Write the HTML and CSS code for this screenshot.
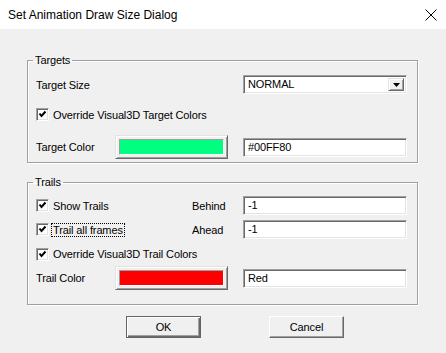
FILE: index.html
```html
<!DOCTYPE html>
<html>
<head>
<meta charset="utf-8">
<link rel="stylesheet" href="styles.css">
</head>
<body>
<div class="titlebar">
  <span class="title">Set Animation Draw Size Dialog</span>
  <svg class="close" width="12" height="12" viewBox="0 0 12 12"><path d="M0.5 0.5 L11.5 11.5 M11.5 0.5 L0.5 11.5" stroke="#000" stroke-width="1" fill="none"/></svg>
</div>
<div class="client">
  <fieldset class="group targets">
    <legend>Targets</legend>
    <div class="grid tgrid">
      <span class="lbl t-r1">Target Size</span>
      <div class="combo t-r1">NORMAL<span class="drop"><svg width="7" height="4" viewBox="0 0 7 4"><path d="M0 0 H7 L3.5 4 Z" fill="#000"/></svg></span></div>
      <label class="check t-r2"><span class="box"><svg width="9" height="9" viewBox="0 0 9 9"><path d="M1.5 3.5 L3.5 6 L7.5 1.5" stroke="#000" stroke-width="2" fill="none"/></svg></span><span>Override Visual3D Target Colors</span></label>
      <span class="lbl t-r3">Target Color</span>
      <div class="swatch t-r3"><span class="fill green"></span></div>
      <div class="field t-r3">#00FF80</div>
    </div>
  </fieldset>
  <fieldset class="group trails">
    <legend>Trails</legend>
    <div class="grid rgrid">
      <label class="check r-r1"><span class="box"><svg width="9" height="9" viewBox="0 0 9 9"><path d="M1.5 3.5 L3.5 6 L7.5 1.5" stroke="#000" stroke-width="2" fill="none"/></svg></span><span>Show Trails</span></label>
      <span class="side r-r1">Behind</span>
      <div class="field r-r1">-1</div>
      <label class="check r-r2"><span class="box"><svg width="9" height="9" viewBox="0 0 9 9"><path d="M1.5 3.5 L3.5 6 L7.5 1.5" stroke="#000" stroke-width="2" fill="none"/></svg></span><span class="focus">Trail all frames</span></label>
      <span class="side r-r2">Ahead</span>
      <div class="field r-r2">-1</div>
      <label class="check r-r3"><span class="box"><svg width="9" height="9" viewBox="0 0 9 9"><path d="M1.5 3.5 L3.5 6 L7.5 1.5" stroke="#000" stroke-width="2" fill="none"/></svg></span><span>Override Visual3D Trail Colors</span></label>
      <span class="lbl r-r4">Trail Color</span>
      <div class="swatch r-r4"><span class="fill red"></span></div>
      <div class="field r-r4">Red</div>
    </div>
  </fieldset>
  <div class="buttons">
    <button class="btn default">OK</button>
    <button class="btn">Cancel</button>
  </div>
</div>
</body>
</html>
```

FILE: styles.css
```css
* { box-sizing: border-box; }
html, body { margin: 0; padding: 0; }
body {
  width: 446px;
  height: 353px;
  overflow: hidden;
  background: #f0f0f0;
  font-family: "Liberation Sans", Arial, sans-serif;
  font-size: 11px;
  letter-spacing: -0.12px;
  color: #000;
}
.titlebar {
  height: 29px;
  background: #fff;
  display: flex;
  align-items: center;
  justify-content: space-between;
  padding: 0 9px 0 8px;
}
.title { font-size: 12px; letter-spacing: 0; }
.close { display: block; }
.client { padding: 25px 0 0 27px; }
.group {
  width: 391px;
  margin: 0;
  border: 1px solid #a0a0a0;
  box-shadow: 1px 1px 0 #fff, inset 1px 1px 0 #fff;
  min-width: 0;
}
.group legend {
  padding: 0 2px;
  margin-left: -3px;
  line-height: 13px;
}
.targets { padding: 8px 10px 3px 8px; }
.trails { padding: 7px 10px 14px 8px; margin-top: 13px; }
.grid {
  display: grid;
  grid-template-columns: 79px 113px 15px 164px;
  align-items: center;
}
.tgrid { grid-template-rows: 19px 41px 24px; }
.rgrid { grid-template-rows: 19px 5px 19px 3px 24px 24px; }
.t-r1 { grid-row: 1; }
.t-r2 { grid-row: 2; }
.t-r3 { grid-row: 3; }
.r-r1 { grid-row: 1; }
.r-r2 { grid-row: 3; }
.r-r3 { grid-row: 5; }
.r-r4 { grid-row: 6; }
.lbl { grid-column: 1; }
.check { grid-column: 1 / 4; display: flex; align-items: center; gap: 4px; }
.side { grid-column: 2; margin-left: 77px; }
.combo, .field { grid-column: 4; }
.swatch { grid-column: 2; }

.box {
  width: 13px;
  height: 13px;
  background: #fff;
  border: 1px solid;
  border-color: #a0a0a0 #fff #fff #a0a0a0;
  box-shadow: inset 1px 1px 0 #696969, inset -1px -1px 0 #e3e3e3;
  display: flex;
  align-items: center;
  justify-content: center;
  flex: none;
}
.box svg { display: block; }
.focus { outline: 1px dotted #000; outline-offset: 0; padding: 0 1px; margin-left: -1px; }

.field, .combo {
  height: 19px;
  background: #fff;
  border: 1px solid;
  border-color: #a0a0a0 #fff #fff #a0a0a0;
  box-shadow: inset 1px 1px 0 #696969, inset -1px -1px 0 #e3e3e3;
  padding: 0 4px;
  line-height: 17px;
}
.combo { position: relative; }
.drop {
  position: absolute;
  right: 2px;
  top: 2px;
  width: 16px;
  height: 13px;
  background: #f0f0f0;
  border: 1px solid;
  border-color: #e3e3e3 #696969 #696969 #e3e3e3;
  box-shadow: inset 1px 1px 0 #fff, inset -1px -1px 0 #a0a0a0;
  display: flex;
  align-items: center;
  justify-content: center;
}
.drop svg { display: block; }

.swatch {
  height: 24px;
  background: #f0f0f0;
  border: 1px solid;
  border-color: #e3e3e3 #696969 #696969 #e3e3e3;
  box-shadow: inset 1px 1px 0 #fff, inset -1px -1px 0 #a0a0a0;
  padding: 3px;
  display: flex;
}
.fill {
  flex: 1;
  border: 1px solid;
  border-color: #a0a0a0 #fff #fff #a0a0a0;
}
.green { background: #00ff80; }
.red { background: #ff0000; }

.buttons {
  display: flex;
  gap: 68px;
  padding: 11px 0 0 99px;
}
.btn {
  width: 75px;
  height: 22px;
  font-family: "Liberation Sans", Arial, sans-serif;
  font-size: 11px;
  letter-spacing: -0.12px;
  color: #000;
  background: #f0f0f0;
  border: 1px solid;
  border-color: #fff #696969 #696969 #fff;
  box-shadow: inset -1px -1px 0 #a0a0a0, inset 1px 1px 0 #f0f0f0;
  padding: 0;
  margin: 0;
}
.btn.default {
  border: 1px solid #646464;
  box-shadow: inset 1px 1px 0 #fff, inset -1px -1px 0 #696969, inset -2px -2px 0 #a0a0a0;
}
```
